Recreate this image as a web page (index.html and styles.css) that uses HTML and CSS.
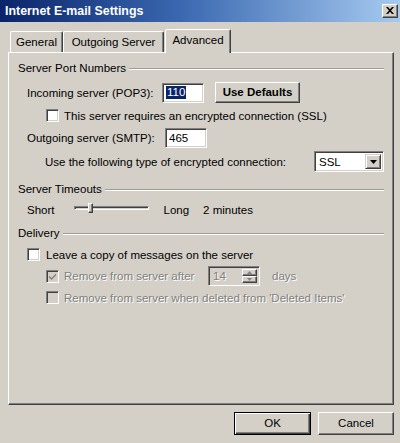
FILE: index.html
```html
<!DOCTYPE html>
<html>
<head>
<meta charset="utf-8">
<title>Internet E-mail Settings</title>
<link rel="stylesheet" href="styles.css">
</head>
<body>
<div class="window">
  <div class="titlebar">
    <span class="title">Internet E-mail Settings</span>
    <span class="close"><svg width="8" height="7" viewBox="0 0 8 7"><path d="M0 0h2l2 2.2L6 0h2L5 3.5 8 7H6L4 4.8 2 7H0l3-3.5z" fill="#000"/></svg></span>
  </div>
  <div class="client">
    <div class="tabs">
      <div class="tab t-general">General</div>
      <div class="tab t-outgoing">Outgoing Server</div>
      <div class="tab t-advanced active">Advanced</div>
    </div>
    <div class="panel">
      <div class="group-title"><span>Server Port Numbers</span><span class="rule"></span></div>
      <div class="row row-incoming">
        <span class="lbl lbl-in">Incoming server (POP3):</span>
        <span class="edit"><span class="sel">110</span></span>
        <span class="btn btn-defaults">Use Defaults</span>
      </div>
      <div class="row row-ssl">
        <span class="check"></span>
        <span class="ctext">This server requires an encrypted connection (SSL)</span>
      </div>
      <div class="row row-outgoing">
        <span class="lbl lbl-out">Outgoing server (SMTP):</span>
        <span class="edit">465</span>
      </div>
      <div class="row row-enc">
        <span>Use the following type of encrypted connection:</span>
        <span class="combo"><span class="combo-val">SSL</span><span class="combo-btn"><svg width="7" height="4" viewBox="0 0 7 4"><path d="M0 0h7L3.5 4z" fill="#000"/></svg></span></span>
      </div>

      <div class="group-title gt-timeouts"><span>Server Timeouts</span><span class="rule"></span></div>
      <div class="row row-slider">
        <span>Short</span>
        <span class="slider"><span class="track"></span><span class="thumb"></span></span>
        <span class="long">Long</span>
        <span class="minutes">2 minutes</span>
      </div>

      <div class="group-title gt-delivery"><span>Delivery</span><span class="rule"></span></div>
      <div class="row row-leave">
        <span class="check"></span>
        <span class="ctext ctext-leave">Leave a copy of messages on the server</span>
      </div>
      <div class="row row-after">
        <span class="check disabled"><svg width="9" height="9" viewBox="0 0 9 9"><path d="M1 3.5l2.5 2.5L8 1.5v2L3.5 8 1 5.5z" fill="#808080"/></svg></span>
        <span class="ctext dis lbl-after">Remove from server after</span>
        <span class="spin"><span class="spin-val">14</span><span class="spin-btns"><span class="sb"><svg width="5" height="3" viewBox="0 0 5 3"><path d="M2.5 0L5 3H0z" fill="#808080"/></svg></span><span class="sb"><svg width="5" height="3" viewBox="0 0 5 3"><path d="M0 0h5L2.5 3z" fill="#808080"/></svg></span></span></span>
        <span class="dis days">days</span>
      </div>
      <div class="row row-deleted">
        <span class="check disabled"></span>
        <span class="ctext dis">Remove from server when deleted from 'Deleted Items'</span>
      </div>
    </div>
    <div class="buttons">
      <span class="btn btn-ok">OK</span>
      <span class="btn btn-cancel">Cancel</span>
    </div>
  </div>
</div>
</body>
</html>
```

FILE: styles.css
```css
* { box-sizing: border-box; }
html, body { margin: 0; padding: 0; }
body {
  background: #d4d0c8;
  font-family: "Liberation Sans", Arial, sans-serif;
  font-size: 11.5px;
  line-height: 14px;
  color: #000;
}
.window {
  width: 400px;
  height: 443px;
  display: flex;
  flex-direction: column;
  background: #d4d0c8;
  overflow: hidden;
}
.titlebar {
  height: 22px;
  flex: none;
  display: flex;
  align-items: center;
  justify-content: space-between;
  padding: 0 2px 0 5px;
  background: linear-gradient(to right, #0a246a 0%, #3a68b0 45%, #a6caf0 100%);
}
.title {
  color: #fff;
  font-weight: bold;
  font-size: 12.4px;
}
.close {
  width: 16px;
  height: 14px;
  background: #d4d0c8;
  border: 1px solid;
  border-color: #fff #404040 #404040 #fff;
  box-shadow: inset -1px -1px #808080;
  display: flex;
  align-items: center;
  justify-content: center;
  padding-bottom: 1px;
}
.client {
  flex: 1;
  display: flex;
  flex-direction: column;
  padding: 7px 6px 8px 8px;
}
.tabs {
  display: flex;
  align-items: flex-end;
  height: 23px;
  padding-left: 2px;
  flex: none;
}
.tab {
  height: 21px;
  display: flex;
  align-items: center;
  justify-content: center;
  border: 1px solid;
  border-bottom: none;
  border-color: #fff #404040 transparent #fff;
  box-shadow: inset -1px 0 #808080;
  border-radius: 2px 2px 0 0;
  padding-bottom: 1px;
}
.t-general { width: 53px; }
.t-outgoing { width: 101px; }
.t-advanced { width: 66px; margin-left: 1px; }
.tab.active {
  height: 24px;
  margin-bottom: -1px;
  position: relative;
  z-index: 1;
  background: #d4d0c8;
  padding-bottom: 4px;
}
.panel {
  flex: 1;
  display: flex;
  flex-direction: column;
  border: 1px solid;
  border-color: #fff #404040 #404040 #fff;
  box-shadow: inset -1px -1px #808080;
  padding: 8px 9px 0 9px;
}
.group-title {
  display: flex;
  align-items: center;
  height: 14px;
}
.rule {
  flex: 1;
  height: 2px;
  margin-left: 3px;
  margin-top: 1px;
  border-top: 1px solid #a09c94;
  border-bottom: 1px solid #fff;
}
.gt-timeouts { margin-top: 10px; }
.gt-delivery { margin-top: 6px; }
.row {
  display: flex;
  align-items: center;
}
.row-incoming { margin-top: 7px; height: 21px; padding-left: 9px; }
.lbl-in { width: 135px; }
.lbl-out { width: 138px; }
.edit {
  width: 42px;
  height: 20px;
  background: #fff;
  border: 1px solid;
  border-color: #808080 #fff #fff #808080;
  box-shadow: inset 1px 1px #404040, inset -1px -1px #d4d0c8;
  padding: 0 3px;
  display: flex;
  align-items: center;
}
.sel {
  background: #0a246a;
  color: #fff;
  padding: 0 1px;
  line-height: 13px;
}
.btn {
  display: flex;
  align-items: center;
  justify-content: center;
  background: #d4d0c8;
  border: 1px solid;
  border-color: #fff #404040 #404040 #fff;
  box-shadow: inset -1px -1px #808080;
  padding-bottom: 1px;
}
.btn-defaults {
  width: 85px;
  height: 21px;
  margin-left: 11px;
  font-weight: bold;
}
.row-ssl { margin-top: 4px; height: 17px; padding-left: 28px; }
.check {
  width: 13px;
  height: 13px;
  flex: none;
  background: #fff;
  border: 1px solid;
  border-color: #808080 #fff #fff #808080;
  box-shadow: inset 1px 1px #404040, inset -1px -1px #d4d0c8;
  display: flex;
  align-items: center;
  justify-content: center;
}
.check.disabled { background: #d4d0c8; }
.ctext { margin-left: 5px; }
.row-outgoing { margin-top: 3px; height: 21px; padding-left: 9px; }
.row-enc { margin-top: 3px; height: 21px; padding-left: 27px; justify-content: space-between; }
.combo {
  width: 70px;
  height: 21px;
  background: #fff;
  border: 1px solid;
  border-color: #808080 #fff #fff #808080;
  box-shadow: inset 1px 1px #404040, inset -1px -1px #d4d0c8;
  display: flex;
  align-items: stretch;
  padding: 2px;
}
.combo-val {
  flex: 1;
  display: flex;
  align-items: center;
  padding-left: 2px;
}
.combo-btn {
  width: 16px;
  background: #d4d0c8;
  border: 1px solid;
  border-color: #d4d0c8 #404040 #404040 #d4d0c8;
  box-shadow: inset 1px 1px #fff, inset -1px -1px #808080;
  display: flex;
  align-items: center;
  justify-content: center;
}
.row-slider { margin-top: 4px; height: 20px; padding-left: 9px; }
.slider {
  width: 75px;
  height: 20px;
  margin-left: 19px;
  position: relative;
  display: flex;
  align-items: flex-start;
}
.track {
  margin-top: 6px;
  width: 100%;
  height: 4px;
  border: 1px solid;
  border-color: #808080 #fff #fff #808080;
  box-shadow: inset 1px 1px #404040;
}
.thumb {
  position: absolute;
  left: 14px;
  top: 3px;
  width: 5px;
  height: 10px;
  background: #d4d0c8;
  border: 1px solid;
  border-color: #fff #404040 #404040 #fff;
  box-shadow: inset -1px -1px #808080;
}
.long { margin-left: 15px; }
.minutes { margin-left: 14px; }
.row-leave { margin-top: 6px; height: 17px; padding-left: 9px; }
.ctext-leave { margin-left: 6px; }
.row-after { margin-top: 3px; height: 20px; padding-left: 28px; }
.dis { color: #808080; text-shadow: 1px 1px 0 #fff; }
.lbl-after { width: 144px; }
.spin {
  width: 52px;
  height: 20px;
  background: #d4d0c8;
  border: 1px solid;
  border-color: #808080 #fff #fff #808080;
  box-shadow: inset 1px 1px #404040, inset -1px -1px #d4d0c8;
  display: flex;
  align-items: stretch;
  padding: 2px 2px 2px 2px;
}
.spin-val {
  flex: 1;
  display: flex;
  align-items: center;
  padding-left: 2px;
  color: #808080;
  text-shadow: 1px 1px 0 #fff;
}
.spin-btns {
  width: 15px;
  display: flex;
  flex-direction: column;
}
.sb {
  flex: 1;
  background: #d4d0c8;
  border: 1px solid;
  border-color: #fff #404040 #404040 #fff;
  box-shadow: inset -1px -1px #808080;
  display: flex;
  align-items: center;
  justify-content: center;
}
.days { margin-left: 12px; }
.row-deleted { margin-top: 3px; height: 17px; padding-left: 28px; }
.buttons {
  flex: none;
  display: flex;
  justify-content: flex-end;
  gap: 7px;
  margin-top: 7px;
  height: 23px;
}
.btn-ok {
  width: 77px;
  height: 23px;
  border: 1px solid #000;
  box-shadow: inset 1px 1px #fff, inset -1px -1px #404040, inset -2px -2px #808080;
}
.btn-cancel {
  width: 76px;
  height: 23px;
}
```
